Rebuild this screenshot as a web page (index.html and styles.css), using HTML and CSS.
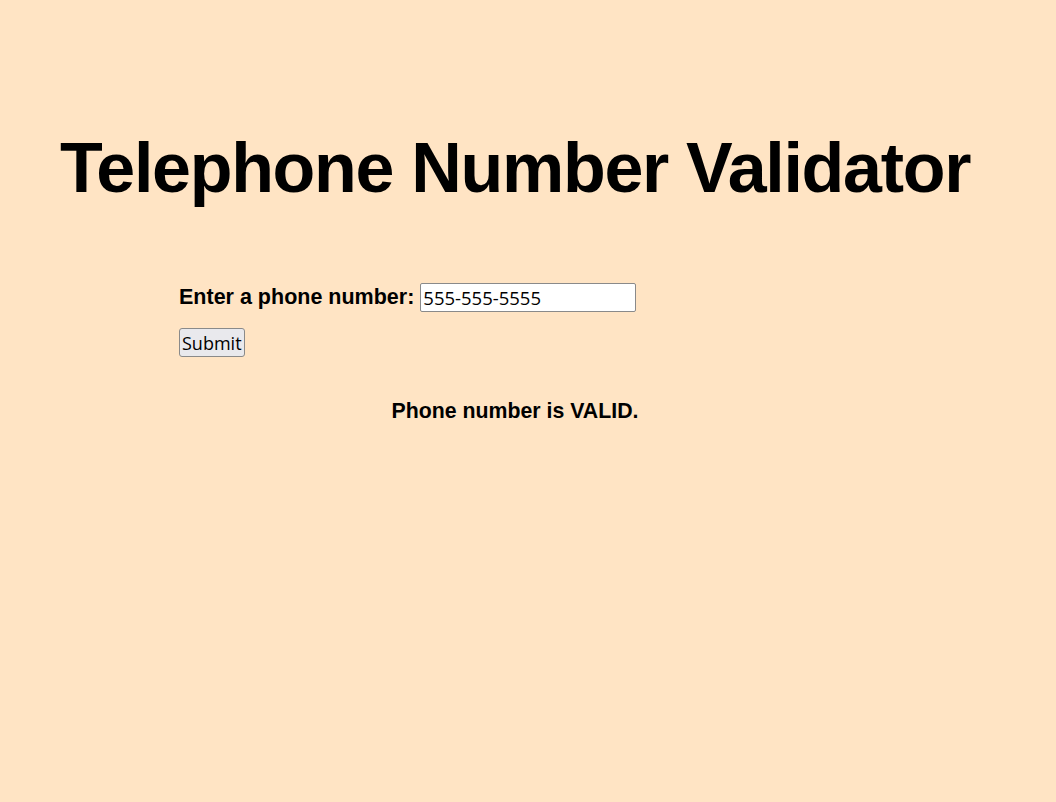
FILE: index.html
```html
<!DOCTYPE html>
<html>
<head>
<meta charset="utf-8">
<link rel="stylesheet" href="styles.css">
</head>
<body>
<h1 class="title">Telephone Number Validator</h1>
<div class="panel">
  <form class="form">
    <div class="row">
      <label class="label" for="phone">Enter a phone number:</label>
      <input class="input" id="phone" type="text" value="555-555-5555">
    </div>
    <button class="btn" type="button">Submit</button>
  </form>
  <p class="result">Phone number is VALID.</p>
</div>
</body>
</html>
```
FILE: styles.css
```css
html, body {
  background: #ffe4c4;
}
body {
  margin: 8px;
  font-family: "Liberation Sans", Arial, sans-serif;
  color: #000;
}
.title {
  margin: 112px 0 0 52px;
  font-size: 70px;
  font-weight: bold;
  line-height: 96px;
  letter-spacing: -1.3px;
}
.panel {
  margin: 67px 0 0 171px;
  width: 672px;
}
.form {
  display: flex;
  flex-direction: column;
  align-items: flex-start;
  gap: 16px;
}
.row {
  display: flex;
  align-items: center;
  gap: 6px;
}
.label {
  font-size: 21.5px;
  font-weight: bold;
}
.input {
  width: 216px;
  height: 29px;
  box-sizing: border-box;
  font-family: "Open Sans", "Noto Sans", sans-serif;
  font-size: 18.5px;
  padding: 0 2px;
  border: 1px solid #8a8a8a;
  border-radius: 2px;
  background: #fff;
}
.btn {
  height: 29px;
  box-sizing: border-box;
  font-family: "Open Sans", "Noto Sans", sans-serif;
  font-size: 18px;
  padding: 0 2px;
  border: 1px solid #8a8a8a;
  border-radius: 3px;
  background: #e9e9ed;
}
.result {
  margin: 42px 0 0;
  text-align: center;
  font-size: 21.3px;
  font-weight: bold;
}
```
